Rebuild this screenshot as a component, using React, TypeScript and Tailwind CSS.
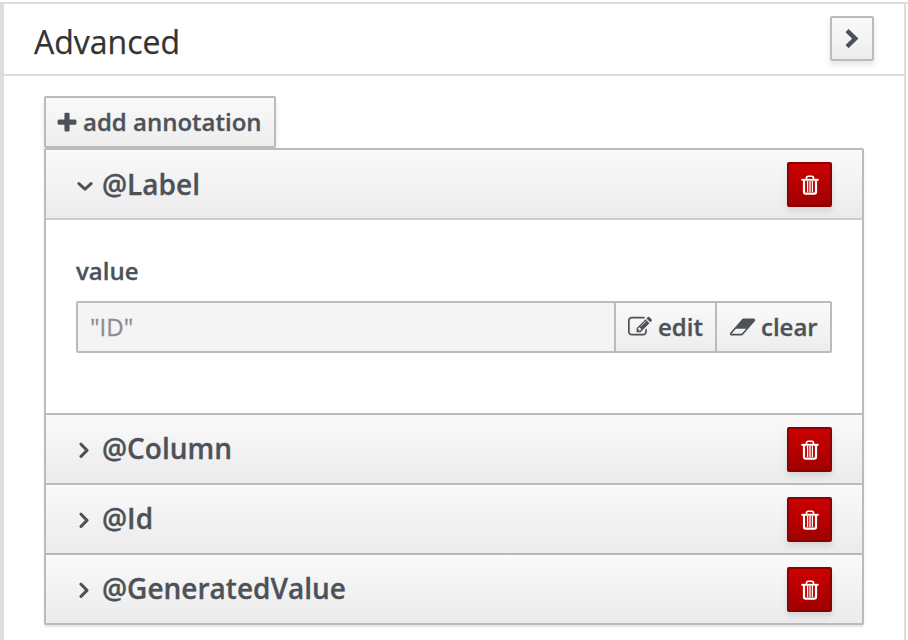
import React from "react";

const PLUS =
  "M1600 736v192q0 40-28 68t-68 28h-416v416q0 40-28 68t-68 28h-192q-40 0-68-28t-28-68v-416h-416q-40 0-68-28t-28-68v-192q0-40 28-68t68-28h416v-416q0-40 28-68t68-28h192q40 0 68 28t28 68v416h416q40 0 68 28t28 68z";
const EDIT =
  "M888 1184l116-116-152-152-116 116v56h96v96h56zm440-720q-16-16-33 1l-350 350q-17 17-1 33t33-1l350-350q17-17 1-33zm80 594v190q0 119-84.5 203.5t-203.5 84.5h-832q-119 0-203.5-84.5t-84.5-203.5v-832q0-119 84.5-203.5t203.5-84.5h832q63 0 117 25 15 7 18 23 3 17-9 29l-49 49q-14 14-32 8-23-6-45-6h-832q-66 0-113 47t-47 113v832q0 66 47 113t113 47h832q66 0 113-47t47-113v-126q0-13 9-22l64-64q15-15 35-7t20 29zm-96-738l288 288-672 672h-288v-288zm444 132l-92 92-288-288 92-92q28-28 68-28t68 28l152 152q28 28 28 68t-28 68z";
const ERASER =
  "M960 1408l336-384h-768l-336 384h768zm1013-1077q15 34 9.5 71.5t-30.5 65.5l-896 1024q-38 44-96 44h-768q-38 0-69.5-20.5t-47.5-54.5q-15-34-9.5-71.5t30.5-65.5l896-1024q38-44 96-44h768q38 0 69.5 20.5t47.5 54.5z";

function TrashIcon() {
  return (
    <svg width="18" height="20" viewBox="0 0 18 20" fill="none" stroke="white">
      <path d="M5.5 4.2V3Q5.5 1.3 7.2 1.3h3.6q1.7 0 1.7 1.7v1.2" strokeWidth="1.6" />
      <path d="M.4 4.8h17.2" strokeWidth="1.9" />
      <path d="M3 5v12q0 1.7 1.7 1.7h8.6q1.7 0 1.7-1.7V5" strokeWidth="2.2" />
      <path d="M6.6 6v11M9 6v11M11.4 6v11" strokeWidth="1.3" />
    </svg>
  );
}

function Annotation({ name, open, last }: { name: string; open?: boolean; last?: boolean }) {
  return (
    <div
      className={`flex h-[68px] shrink-0 items-center justify-between bg-linear-to-b from-[#fafafa] to-[#ebebeb] pr-[30px] pl-[31px] ${
        open || last ? "" : "box-content"
      }`}
    >
      <div className={`flex items-center ${open ? "" : "mb-0.5"}`}>
        <svg
          width="16"
          height="16"
          viewBox="0 0 16 16"
          fill="none"
          stroke="currentColor"
          strokeWidth="3"
          strokeLinecap="round"
          strokeLinejoin="round"
          className="mt-1 mr-[9px]"
        >
          <path d={open ? "M1.9 5.6 8 11.2l6.1-5.6" : "M4 2.2 10 8.4l-6 6"} />
        </svg>
        <span className="text-[28px] leading-[34px] font-semibold">{name}</span>
      </div>
      <button className="flex size-[45px] items-center justify-center rounded-[2px] border-2 border-[#8b0000] bg-linear-to-b from-[#cc0000] to-[#a00000] pt-px shadow-[0_4px_6px_rgba(3,3,3,0.1)]">
        <TrashIcon />
      </button>
    </div>
  );
}

export default function App() {
  return (
    <div className="h-[640px] w-[908px] overflow-hidden bg-white pt-[2px] font-['Open_Sans',sans-serif] text-[#4d5258]">
      <div className="h-[638px] border-t-2 border-[#ddd]">
        <div className="h-full w-[906px] border-r-2 border-l-4 border-[#ddd]">
          <header className="flex h-[72px] items-start justify-between border-b-2 border-[#ddd] pt-3 pr-[30px] pl-[30px]">
            <h2 className="mt-[3px] text-[32px] leading-[46px] text-[#333] [-webkit-text-stroke:0.25px]">Advanced</h2>
            <button className="flex h-[45px] w-11 items-center justify-center rounded-[2px] border-2 border-[#bbb] bg-linear-to-b from-[#fafafa] to-[#ededed] shadow-[0_4px_6px_rgba(3,3,3,0.1)]">
              <svg width="14" height="20" viewBox="0 0 14 20" fill="none" stroke="currentColor" strokeWidth="4.4">
                <path d="M2 1.6 10.3 9.6 2 17.6" />
              </svg>
            </button>
          </header>

          <main className="px-10 pt-5 [-webkit-text-stroke:0.3px]">
            <button className="flex h-[52px] w-[232px] items-center rounded-[2px] border-2 border-[#bbb] bg-linear-to-b from-[#fafafa] to-[#ededed] pl-[9px] shadow-[0_4px_6px_rgba(3,3,3,0.1)]">
              <svg width="24" height="24" viewBox="0 0 1792 1792" fill="currentColor" className="mt-px">
                <path d={PLUS} />
              </svg>
              <span className="ml-1 text-2xl font-semibold whitespace-nowrap">add annotation</span>
            </button>

            <div className="relative flex w-[820px] flex-col divide-y-2 divide-[#bbb] rounded-[2px] border-2 border-[#bbb] bg-white shadow-[0_2px_2px_rgba(3,3,3,0.1)]">
              <section>
                <Annotation name="@Label" open />
                <div className="h-[195px] border-t-2 border-[#ccc] px-[30px] pt-[34px]">
                  <label className="block text-2xl leading-[34px] font-semibold">value</label>
                  <div className="mt-[13px] flex h-[52px] w-[756px] rounded-[2px] border-2 border-[#bbb] text-2xl">
                    <div className="flex w-[536px] items-center bg-[#f4f4f4] pl-3 text-[#8b8d8f]">"ID"</div>
                    <button className="flex w-[101px] items-center border-l-2 border-[#bbb] bg-linear-to-b from-[#fafafa] to-[#ededed] pl-3 font-semibold">
                      <svg width="24" height="24" viewBox="0 0 1792 1792" fill="currentColor">
                        <path d={EDIT} />
                      </svg>
                      <span className="ml-[6px]">edit</span>
                    </button>
                    <button className="flex flex-1 items-center border-l-2 border-[#bbb] bg-linear-to-b from-[#fafafa] to-[#ededed] pl-3 font-semibold">
                      <svg width="27" height="24" viewBox="0 0 2048 1792" fill="currentColor">
                        <path d={ERASER} />
                      </svg>
                      <span className="ml-[5px]">clear</span>
                    </button>
                  </div>
                </div>
              </section>
              <Annotation name="@Column" />
              <Annotation name="@Id" />
              <Annotation name="@GeneratedValue" last />
            </div>
          </main>
        </div>
      </div>
    </div>
  );
}
